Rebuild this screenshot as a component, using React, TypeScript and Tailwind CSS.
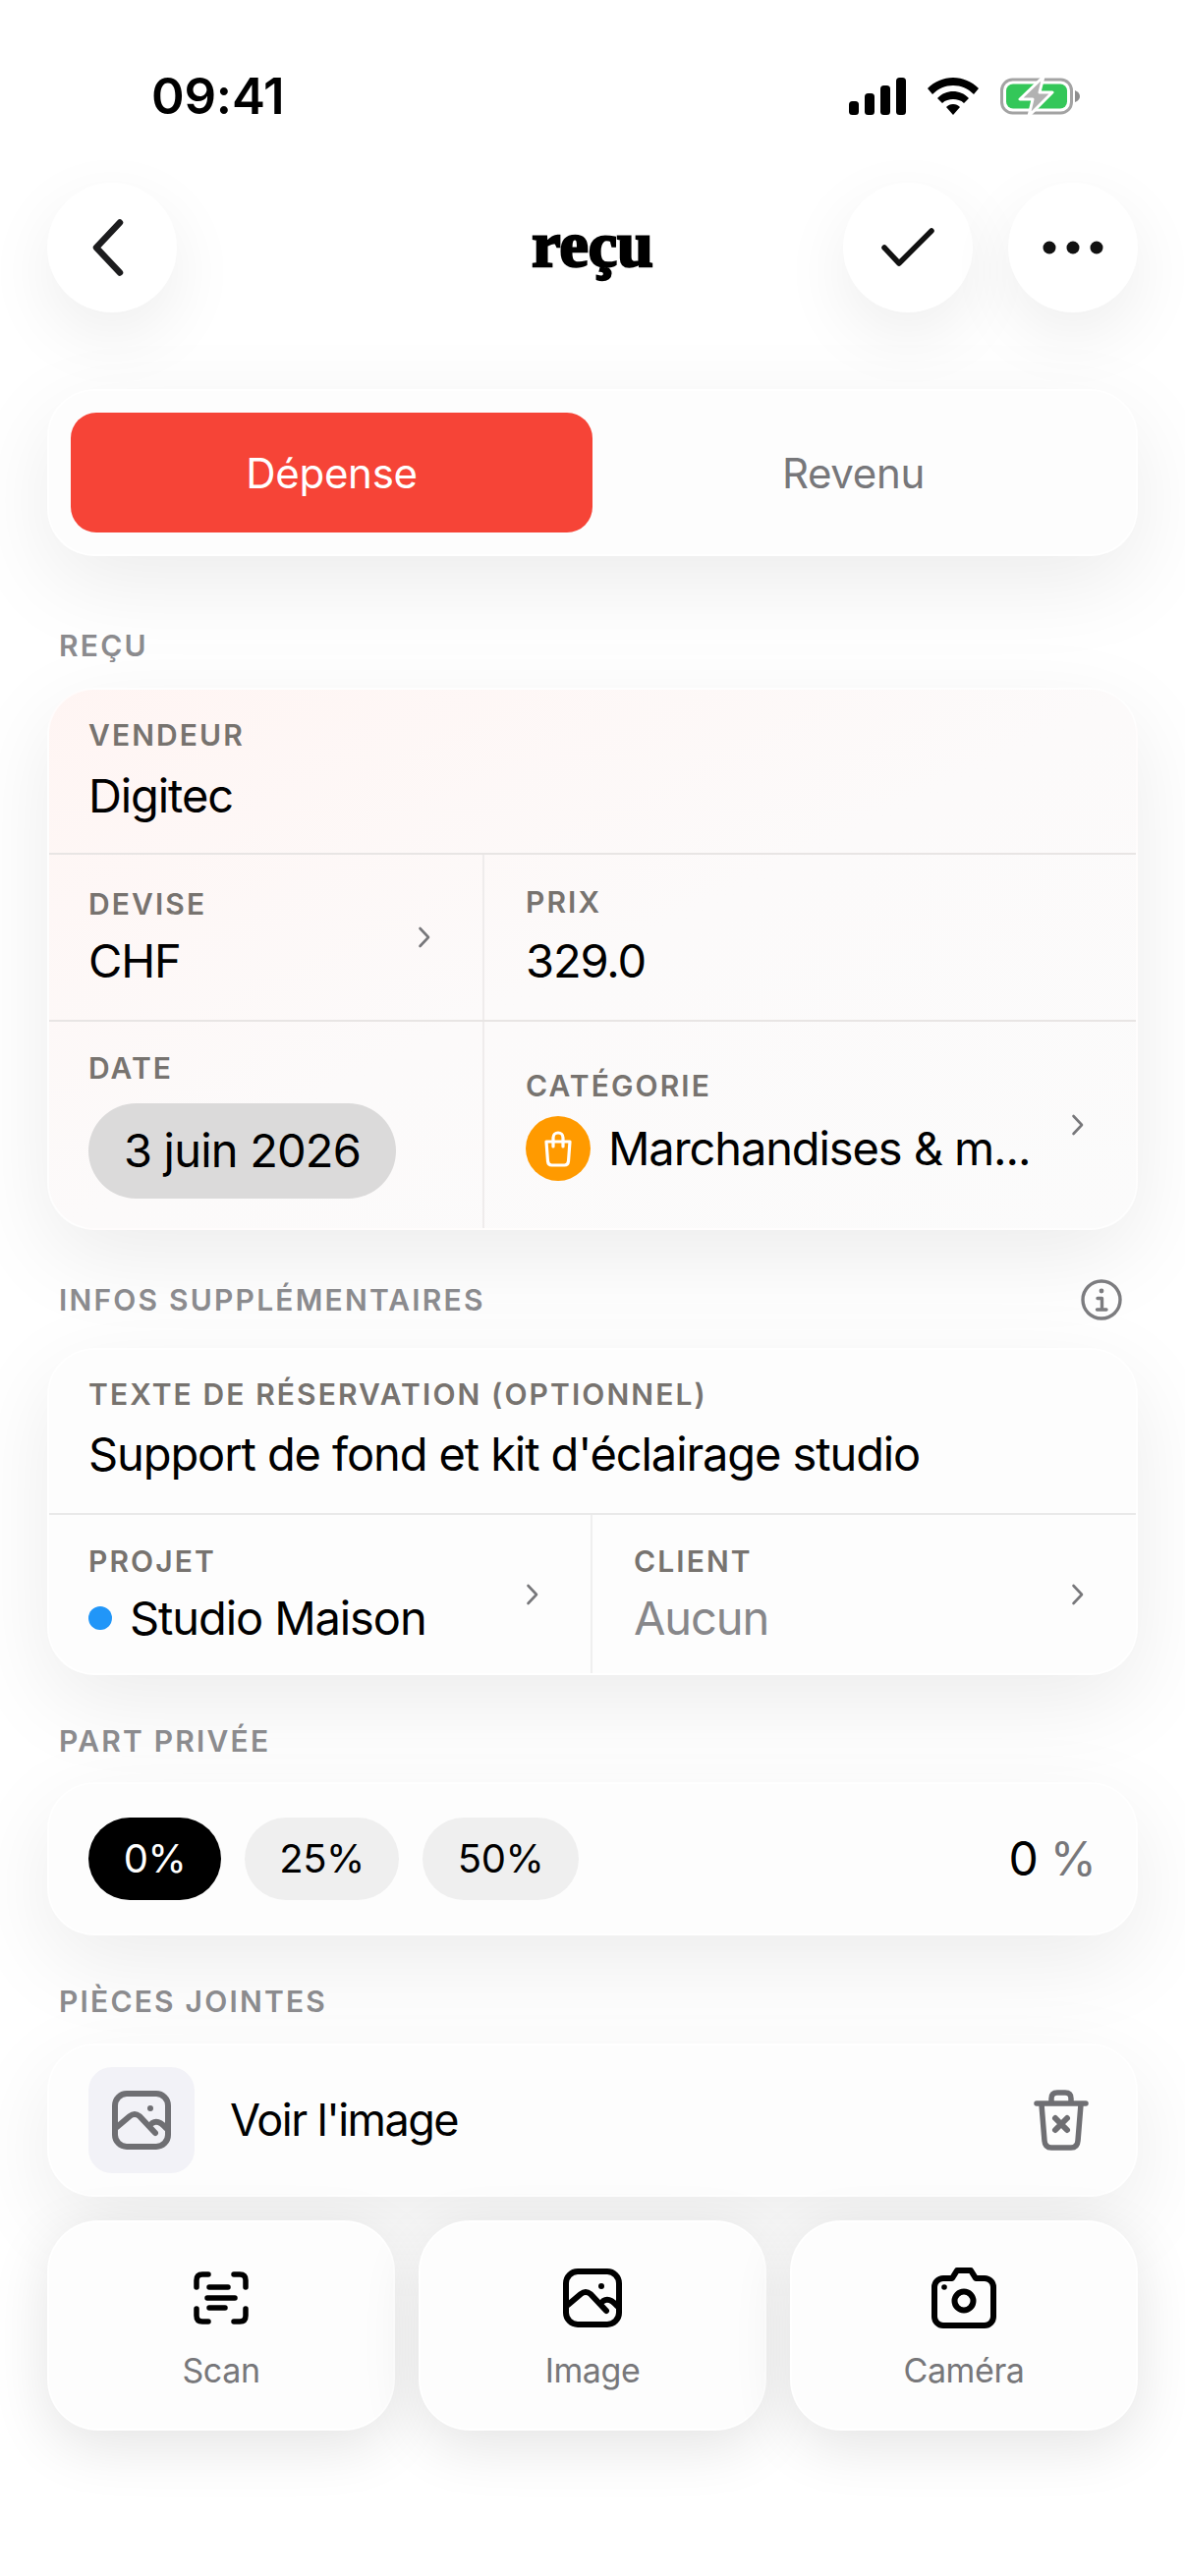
import React from 'react';

const Chevron = () => (
  <svg width="14" height="22" viewBox="0 0 14 22" fill="none" stroke="#77777a" strokeWidth="2.6" strokeLinecap="round" strokeLinejoin="round" className="shrink-0">
    <path d="M2.5 2 L11 11 L2.5 20" />
  </svg>
);

const GalleryIcon = ({ color }: { color: string }) => (
  <svg width="60" height="60" viewBox="0 0 60 60" fill="none" stroke={color} strokeWidth="6" strokeLinecap="round" strokeLinejoin="round">
    <rect x="3" y="3" width="54" height="54" rx="12" />
    <path d="M5 37 L18 26 Q23 22 28 26 L44 43" />
    <path d="M41 33 Q47 29 55 38" />
    <circle cx="39" cy="18" r="3" fill={color} stroke="none" />
  </svg>
);

const Label = ({ children }: { children: React.ReactNode }) => (
  <div className="text-[30px] leading-[34px] font-semibold tracking-[2.1px] text-[#77736f] whitespace-nowrap">{children}</div>
);

const SectionLabel = ({ children }: { children: React.ReactNode }) => (
  <div className="pl-[12px] text-[30px] leading-[34px] font-semibold tracking-[2.2px] text-[#8b8b8e] whitespace-nowrap">{children}</div>
);

const Value = ({ children }: { children: React.ReactNode }) => (
  <div className="text-[47px] leading-[54px] tracking-[-1.1px] font-normal text-black whitespace-nowrap">{children}</div>
);

const card = 'rounded-[48px] bg-[#fdfdfd] border-2 border-white/70 shadow-[0_28px_90px_rgba(0,0,0,0.08)]';
const action = 'rounded-[52px] bg-[#fdfdfd] border-2 border-white/70 shadow-[0_16px_60px_rgba(0,0,0,0.11)] h-[214px] flex flex-col items-center pt-[46px]';
const round = 'w-[132px] h-[132px] rounded-full bg-white flex items-center justify-center shadow-[0_24px_70px_rgba(0,0,0,0.07)]';

export default function App() {
  return (
    <div className="w-[1206px] h-[2622px] bg-white overflow-hidden font-['Inter',sans-serif] text-black">
      {/* status bar */}
      <div className="h-[186px] pt-[66px] pl-[154px] pr-[106px] flex items-start justify-between">
        <div className="text-[51px] leading-[64px] font-semibold tracking-[-0.2px]">09:41</div>
        <div className="flex items-center gap-[22px] pt-[12px]">
          <svg width="58" height="38" viewBox="0 0 58 38" fill="black">
            <rect x="0" y="24" width="10" height="14" rx="3.5" />
            <rect x="16" y="16" width="10" height="22" rx="3.5" />
            <rect x="32" y="8" width="10" height="30" rx="3.5" />
            <rect x="48" y="0" width="10" height="38" rx="3.5" />
          </svg>
          <svg width="52" height="38" viewBox="0 0 52 38" fill="black">
            <path d="M26 0 C36 0 45 4 52 11 L47 17 C41 11 34 8 26 8 C18 8 11 11 5 17 L0 11 C7 4 16 0 26 0 Z" />
            <path d="M26 14 C32 14 37 16 42 21 L37 26 C34 23 30 22 26 22 C22 22 18 23 15 26 L10 21 C15 16 20 14 26 14 Z" />
            <path d="M26 27 C29 27 31 28 33 30 L26 38 L19 30 C21 28 23 27 26 27 Z" />
          </svg>
          <svg width="82" height="40" viewBox="0 0 82 40" fill="none">
            <rect x="1.5" y="3" width="71" height="34" rx="11" stroke="#a3a3a3" strokeWidth="3" />
            <rect x="6" y="7.5" width="62" height="25" rx="7" fill="#34c759" />
            <path d="M76 14 Q81 16 81 20 Q81 24 76 26 Z" fill="#8e8e8e" />
            <path d="M44 0 L20 23 H33 L29 40 L53 16 H40 Z" fill="#b2b2b2" stroke="white" strokeWidth="3" strokeLinejoin="round" />
          </svg>
        </div>
      </div>

      <div className="px-[48px]">
        {/* header */}
        <div className="grid grid-cols-[1fr_auto_1fr] items-center h-[132px]">
          <div className={round}>
            <svg width="32" height="58" viewBox="0 0 32 58" fill="none" stroke="#1c1c1e" strokeWidth="6.5" strokeLinecap="round" strokeLinejoin="round" className="mr-[8px]">
              <path d="M28 3.5 L4 29 L28 54.5" />
            </svg>
          </div>
          <div className="font-['Liberation_Serif',serif] font-bold text-[66px] leading-[64px] [-webkit-text-stroke:2.5px_black] pb-[6px]">reçu</div>
          <div className="flex justify-end gap-[36px]">
            <div className={round}>
              <svg width="54" height="40" viewBox="0 0 54 40" fill="none" stroke="#111" strokeWidth="5.5" strokeLinecap="round" strokeLinejoin="round">
                <path d="M3 20 L18 36 L51 3" />
              </svg>
            </div>
            <div className={round}>
              <svg width="62" height="14" viewBox="0 0 62 14" fill="#111">
                <circle cx="7" cy="7" r="6.5" />
                <circle cx="31" cy="7" r="6.5" />
                <circle cx="55" cy="7" r="6.5" />
              </svg>
            </div>
          </div>
        </div>

        {/* type toggle */}
        <div className={`${card} mt-[78px] h-[170px] p-[22px] flex`}>
          <div className="flex-1 rounded-[26px] bg-[#f64437] text-white text-[42px] tracking-[-0.3px] flex items-center justify-center">Dépense</div>
          <div className="flex-1 text-[#77777a] text-[42px] tracking-[-0.3px] flex items-center justify-center">Revenu</div>
        </div>

        {/* receipt */}
        <div className="mt-[74px]">
          <SectionLabel>REÇU</SectionLabel>
        </div>
        <div className={`${card} mt-[26px] overflow-hidden bg-gradient-to-br from-[#fff5f3] via-[#fcfafa] to-[#fbfbfb]`}>
          <div className="h-[168px] px-[40px] pt-[29px] border-b-2 border-[#e8e5e4]">
            <Label>VENDEUR</Label>
            <div className="mt-[18px]"><Value>Digitec</Value></div>
          </div>
          <div className="grid grid-cols-[443px_1fr] h-[170px] border-b-2 border-[#e8e5e4]">
            <div className="pl-[40px] pr-[52px] flex items-center justify-between border-r-2 border-[#efecec]">
              <div>
                <Label>DEVISE</Label>
                <div className="mt-[14px]"><Value>CHF</Value></div>
              </div>
              <Chevron />
            </div>
            <div className="pl-[42px] pt-[31px]">
              <Label>PRIX</Label>
              <div className="mt-[16px]"><Value>329.0</Value></div>
            </div>
          </div>
          <div className="grid grid-cols-[443px_1fr] h-[210px]">
            <div className="pl-[40px] pt-[30px] border-r-2 border-[#efecec]">
              <Label>DATE</Label>
              <div className="mt-[19px] w-[313px] h-[97px] rounded-full bg-[#dbdada] flex items-center justify-center">
                <div className="text-[47px] leading-[54px] tracking-[-0.8px] whitespace-nowrap pb-[2px]">3 juin 2026</div>
              </div>
            </div>
            <div className="pl-[42px] pr-[52px] flex items-center justify-between">
              <div>
                <Label>CATÉGORIE</Label>
                <div className="mt-[14px] flex items-center gap-[18px]">
                  <div className="w-[66px] h-[66px] rounded-full bg-[#ff9a00] flex items-center justify-center">
                    <svg width="30" height="38" viewBox="0 0 30 38" fill="none" stroke="white" strokeWidth="3.2" strokeLinecap="round" strokeLinejoin="round">
                      <path d="M3 12 H27 L25.5 32 Q25 36 21.5 36 H8.5 Q5 36 4.5 32 Z" />
                      <path d="M10 17 V8 A5 5 0 0 1 20 8 V17" />
                    </svg>
                  </div>
                  <Value>Marchandises &amp; m...</Value>
                </div>
              </div>
              <Chevron />
            </div>
          </div>
        </div>

        {/* extra info */}
        <div className="mt-[50px] flex items-center justify-between pr-[16px] h-[42px]">
          <SectionLabel>INFOS SUPPLÉMENTAIRES</SectionLabel>
          <svg width="42" height="42" viewBox="0 0 42 42" fill="none" stroke="#7c7c7f" strokeWidth="3.4" strokeLinecap="round" strokeLinejoin="round">
            <circle cx="21" cy="21" r="19" />
            <path d="M17 19.5 H21.5 V31 M16.5 31 H26" />
            <circle cx="21" cy="12" r="2.4" fill="#7c7c7f" stroke="none" />
          </svg>
        </div>
        <div className={`${card} mt-[28px] overflow-hidden`}>
          <div className="h-[168px] px-[40px] pt-[28px] border-b-2 border-[#e9e9e9]">
            <Label>TEXTE DE RÉSERVATION (OPTIONNEL)</Label>
            <div className="mt-[17px]"><Value>Support de fond et kit d'éclairage studio</Value></div>
          </div>
          <div className="grid grid-cols-2 h-[161px]">
            <div className="pl-[40px] pr-[52px] flex items-center justify-between border-r-2 border-[#efefef]">
              <div>
                <Label>PROJET</Label>
                <div className="mt-[14px] flex items-center gap-[18px]">
                  <div className="w-[24px] h-[24px] rounded-full bg-[#2196f8]" />
                  <Value>Studio Maison</Value>
                </div>
              </div>
              <Chevron />
            </div>
            <div className="pl-[42px] pr-[52px] flex items-center justify-between">
              <div>
                <Label>CLIENT</Label>
                <div className="mt-[14px] text-[47px] leading-[54px] tracking-[-1.1px] text-[#87878a]">Aucun</div>
              </div>
              <Chevron />
            </div>
          </div>
        </div>

        {/* private share */}
        <div className="mt-[50px]">
          <SectionLabel>PART PRIVÉE</SectionLabel>
        </div>
        <div className={`${card} mt-[25px] h-[156px] pl-[40px] pr-[40px] flex items-center`}>
          <div className="w-[135px] h-[84px] rounded-full bg-black text-white text-[40px] tracking-[-0.5px] flex items-center justify-center">0%</div>
          <div className="ml-[24px] w-[157px] h-[84px] rounded-full bg-[#efefef] text-[40px] tracking-[-0.5px] flex items-center justify-center">25%</div>
          <div className="ml-[24px] w-[159px] h-[84px] rounded-full bg-[#efefef] text-[40px] tracking-[-0.5px] flex items-center justify-center">50%</div>
          <div className="ml-auto text-[48px] flex items-baseline gap-[12px]">
            <span>0</span>
            <span className="text-[#77777a]">%</span>
          </div>
        </div>

        {/* attachments */}
        <div className="mt-[50px]">
          <SectionLabel>PIÈCES JOINTES</SectionLabel>
        </div>
        <div className={`${card} mt-[26px] h-[156px] pl-[40px] pr-[48px] flex items-center`}>
          <div className="w-[108px] h-[108px] rounded-[24px] bg-[#f2f2f7] flex items-center justify-center">
            <GalleryIcon color="#6f6f73" />
          </div>
          <div className="ml-[36px] text-[45px] tracking-[-1.5px] text-black">Voir l'image</div>
          <svg width="56" height="62" viewBox="0 0 56 62" fill="none" stroke="#6f6f73" strokeWidth="5.5" strokeLinecap="round" strokeLinejoin="round" className="ml-auto">
            <path d="M3 14 H53" />
            <path d="M8 15 L11 52 Q11.5 59 18 59 H38 Q44.5 59 45 52 L48 15" />
            <path d="M18 13 V9 Q18 3 24 3 H32 Q38 3 38 9 V13" />
            <path d="M22 29 L34 41 M34 29 L22 41" strokeWidth="6" />
          </svg>
        </div>

        <div className="mt-[24px] grid grid-cols-3 gap-[24px]">
          <div className={action}>
            <div className="h-[62px] flex items-center">
              <svg width="56" height="54" viewBox="0 0 56 54" fill="none" stroke="black" strokeWidth="5.5" strokeLinecap="round" strokeLinejoin="round">
                <path d="M3 16 V9 Q3 3 9 3 H15" />
                <path d="M41 3 H47 Q53 3 53 9 V16" />
                <path d="M3 38 V45 Q3 51 9 51 H15" />
                <path d="M41 51 H47 Q53 51 53 45 V38" />
                <path d="M16 16 H35 M14 27 H42 M16 37 H32" />
              </svg>
            </div>
            <div className="mt-[22px] text-[34px] leading-[42px] tracking-[-0.4px] text-[#77777a]">Scan</div>
          </div>
          <div className={action}>
            <div className="h-[62px] flex items-center"><GalleryIcon color="black" /></div>
            <div className="mt-[22px] text-[34px] leading-[42px] tracking-[-0.4px] text-[#77777a]">Image</div>
          </div>
          <div className={action}>
            <div className="h-[62px] flex items-center">
              <svg width="66" height="62" viewBox="0 0 66 62" fill="none" stroke="black" strokeWidth="6" strokeLinejoin="round">
                <path d="M21 11 L26 3 H40 L45 11 H54 A9 9 0 0 1 63 20 V50 A9 9 0 0 1 54 59 H12 A9 9 0 0 1 3 50 V20 A9 9 0 0 1 12 11 Z" />
                <circle cx="33" cy="34" r="9.5" />
                <circle cx="13" cy="20" r="2.8" fill="black" stroke="none" />
              </svg>
            </div>
            <div className="mt-[22px] text-[34px] leading-[42px] tracking-[-0.4px] text-[#77777a]">Caméra</div>
          </div>
        </div>
      </div>
    </div>
  );
}
